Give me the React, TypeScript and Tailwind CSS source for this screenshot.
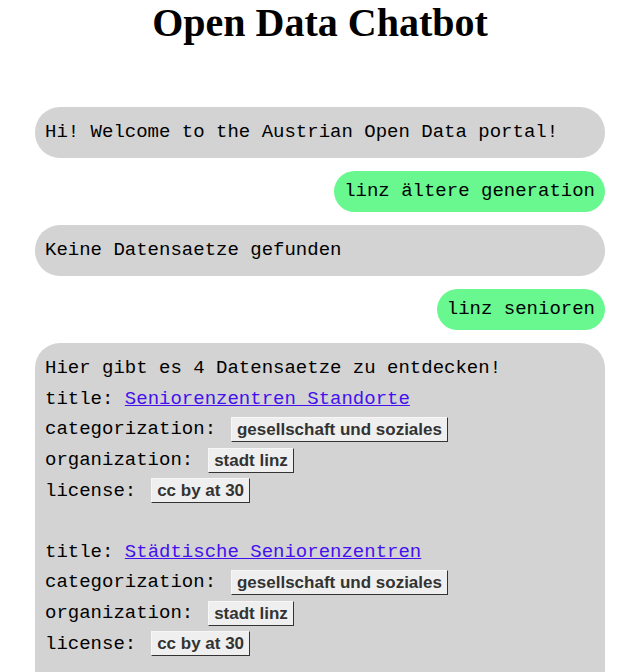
import React from "react";

const mono = { fontFamily: '"Liberation Mono", "Courier New", monospace' };

function Badge({ children }: { children: React.ReactNode }) {
  return (
    <span className="ml-[3.5px] inline-block h-[25px] border border-t-[#f7f7f7] border-l-[#f7f7f7] border-b-[#333333] border-r-[#333333] bg-[#efefef] px-[5px] font-['Liberation_Sans',Arial,sans-serif] text-[17px] font-bold leading-[23px] text-[#333333]">
      {children}
    </span>
  );
}

function Row({ children }: { children: React.ReactNode }) {
  return <div className="flex h-[30.6px] items-center whitespace-pre">{children}</div>;
}

function Dataset({ title }: { title: string }) {
  return (
    <>
      <Row>
        <span>title: </span>
        <a href="#" className="text-[#4411ee] underline">
          {title}
        </a>
      </Row>
      <Row>
        <span>categorization: </span>
        <Badge>gesellschaft und soziales</Badge>
      </Row>
      <Row>
        <span>organization: </span>
        <Badge>stadt linz</Badge>
      </Row>
      <Row>
        <span>license: </span>
        <Badge>cc by at 30</Badge>
      </Row>
    </>
  );
}

export default function App() {
  return (
    <div className="min-h-[672px] bg-white pl-[35px] pr-[25px] text-black">
      <h1 className="m-0 text-center font-['Liberation_Serif','Times_New_Roman',serif] text-[40px] font-bold leading-[46px]">
        Open Data Chatbot
      </h1>
      <div className="mt-[61px] flex flex-col gap-[13px] text-[19px]" style={mono}>
        <div className="rounded-[25px] bg-[#d3d3d3] px-[10px] py-[10px] leading-[30.6px] whitespace-pre">
          Hi! Welcome to the Austrian Open Data portal!
        </div>
        <div className="self-end rounded-[25px] bg-[#68f88f] px-[10px] py-[10px] leading-[21.5px] whitespace-pre">
          linz ältere generation
        </div>
        <div className="rounded-[25px] bg-[#d3d3d3] px-[10px] py-[10px] leading-[30.6px] whitespace-pre">
          Keine Datensaetze gefunden
        </div>
        <div className="self-end rounded-[25px] bg-[#68f88f] px-[10px] py-[10px] leading-[21.5px] whitespace-pre">
          linz senioren
        </div>
        <div className="rounded-[25px] bg-[#d3d3d3] px-[10px] pt-[10px] pb-[40px] leading-[30.6px]">
          <Row>Hier gibt es 4 Datensaetze zu entdecken!</Row>
          <Dataset title="Seniorenzentren Standorte" />
          <div className="h-[30.6px]" />
          <Dataset title="Städtische Seniorenzentren" />
        </div>
      </div>
    </div>
  );
}
